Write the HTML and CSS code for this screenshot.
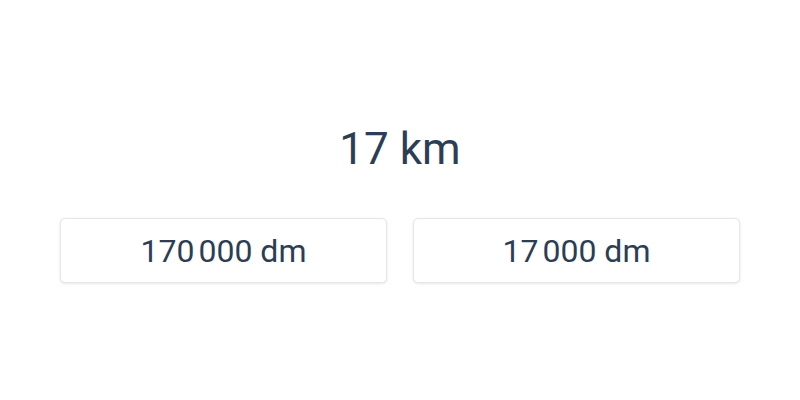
FILE: index.html
```html
<!DOCTYPE html>
<html lang="cs">
<head>
<meta charset="utf-8">
<link rel="stylesheet" href="styles.css">
</head>
<body>
<main class="quiz">
  <div class="question">17 km</div>
  <div class="answers">
    <button class="answer">170&#8239;000 dm</button>
    <button class="answer">17&#8239;000 dm</button>
  </div>
</main>
</body>
</html>
```

FILE: styles.css
```css
html, body {
  margin: 0;
  padding: 0;
  background: #ffffff;
}

body {
  font-family: Roboto, "Noto Sans", sans-serif;
  color: #2c3e55;
}

.quiz {
  width: 800px;
  height: 400px;
  box-sizing: border-box;
  padding: 121px 60px 0;
  display: flex;
  flex-direction: column;
  align-items: stretch;
}

.question {
  text-align: center;
  font-size: 44px;
  line-height: 56px;
  height: 56px;
}

.answers {
  margin-top: 41px;
  display: grid;
  grid-template-columns: 1fr 1fr;
  gap: 26px;
}

.answer {
  height: 65px;
  font-family: inherit;
  font-size: 32px;
  color: inherit;
  background: #ffffff;
  border: 1px solid #e4e6ea;
  border-radius: 5px;
  box-shadow: 0 1px 3px rgba(0, 0, 0, 0.1);
  padding: 0;
  cursor: pointer;
}
```
